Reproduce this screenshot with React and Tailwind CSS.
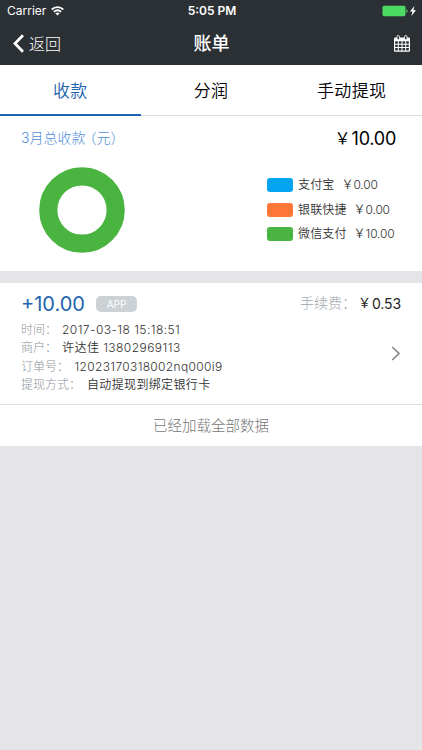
import React from 'react';

const tabs = ['收款', '分润', '手动提现'];

const channels = [
  { name: '支付宝', amount: '0.00', color: 'bg-[#03a5f0]' },
  { name: '银联快捷', amount: '0.00', color: 'bg-[#ff7736]' },
  { name: '微信支付', amount: '10.00', color: 'bg-[#49b43f]' },
];

const details = [
  { label: '时间：', value: '2017-03-18 15:18:51', width: 'w-[41px]', tracking: 'tracking-[0.45px]' },
  { label: '商户：', value: '许达佳 13802969113', width: 'w-[41px]', tracking: 'tracking-[0.45px]' },
  { label: '订单号：', value: '12023170318002nq000i9', width: 'w-[53.5px]', tracking: 'tracking-[0.34px]' },
  { label: '提现方式：', value: '自动提现到绑定银行卡', width: 'w-[66px]', tracking: 'tracking-[0.35px]' },
];

function StatusBar() {
  return (
    <div className="grid h-[22px] grid-cols-3 items-center pl-[7px] pr-[5px] text-[12px] text-white">
      <div className="flex items-center gap-[5px]">
        <span>Carrier</span>
        <svg width="13" height="10" viewBox="0 0 13 10" fill="none" stroke="currentColor" strokeWidth="1.8">
          <path d="M0.7 3.5C4 0.4 9 0.4 12.3 3.5" />
          <path d="M2.8 5.9C5 3.9 8 3.9 10.2 5.9" />
          <path d="M6.5 9.6L4.3 7.3C5.6 6.2 7.4 6.2 8.7 7.3Z" fill="currentColor" stroke="none" />
        </svg>
      </div>
      <span className="text-center font-semibold">5:05 PM</span>
      <div className="flex items-center justify-end">
        <svg width="35" height="12" viewBox="0 0 35 12">
          <rect x="0.5" y="0.8" width="23" height="10.4" rx="1.6" fill="#4cd964" />
          <path d="M24.3 4.2c1.8.4 1.8 3.2 0 3.6z" fill="#4cd964" />
          <path d="M32.4 1L28 6.6h2.5L29.4 11 34 5.2h-2.6z" fill="#fff" />
        </svg>
      </div>
    </div>
  );
}

function CalendarIcon() {
  return (
    <svg width="16" height="17" viewBox="0 0 16 17">
      <path
        fill="#fff"
        fillRule="evenodd"
        d="M1 2.5h14a1 1 0 0 1 1 1v12.3a1 1 0 0 1-1 1h-14a1 1 0 0 1-1-1V3.5a1 1 0 0 1 1-1zM1.2 6.3v2.4h2.6v-2.4zM4.8 6.3v2.4h2.7v-2.4zM8.5 6.3v2.4h2.7v-2.4zM12.2 6.3v2.4h2.6v-2.4zM1.2 9.7v2.4h2.6v-2.4zM4.8 9.7v2.4h2.7v-2.4zM8.5 9.7v2.4h2.7v-2.4zM12.2 9.7v2.4h2.6v-2.4zM1.2 13.1v2.5h2.6v-2.5zM4.8 13.1v2.5h2.7v-2.5zM8.5 13.1v2.5h2.7v-2.5zM12.2 13.1v2.5h2.6v-2.5z"
      />
      <rect x="3" y="0.5" width="2.4" height="4.3" rx="1.2" fill="#2b3034" stroke="#fff" strokeWidth="0.9" />
      <rect x="10.6" y="0.5" width="2.4" height="4.3" rx="1.2" fill="#2b3034" stroke="#fff" strokeWidth="0.9" />
    </svg>
  );
}

function Header() {
  return (
    <header className="h-[65px] bg-[#2b3034]">
      <StatusBar />
      <div className="grid h-[43px] grid-cols-3 items-center pl-[13px] pr-[12px] text-white">
        <button className="flex items-center gap-[5px]">
          <svg width="11" height="19" viewBox="0 0 11 19" fill="none" stroke="currentColor" strokeWidth="2.8">
            <path d="M10 1.2L2 9.5L10 17.8" />
          </svg>
          <span className="text-[16px] font-light">返回</span>
        </button>
        <h1 className="text-center text-[18px] font-medium">账单</h1>
        <div className="flex justify-end">
          <CalendarIcon />
        </div>
      </div>
    </header>
  );
}

function Tabs() {
  return (
    <nav className="grid h-[51px] grid-cols-3 bg-white text-[17px] font-[350] tracking-[0.35px]">
      {tabs.map((tab, i) => (
        <button
          key={tab}
          className={
            i === 0
              ? 'border-b-2 border-[#1d64ae] pt-[4px] text-[#1d64ae]'
              : 'border-b border-[#dcdcde] pt-[3px] text-black'
          }
        >
          {tab}
        </button>
      ))}
    </nav>
  );
}

function Summary() {
  return (
    <section className="h-[155px] bg-white pl-[21px] pr-[26px] pt-[10px]">
      <div className="flex h-[24px] items-center justify-between">
        <span className="flex pb-[2px] text-[14px] font-light text-[#4f8edb]">
          3月总收款<span className="-ml-[3px]">（元）</span>
        </span>
        <span className="flex items-center text-[18px] text-black">
          <span className="w-[17px] shrink-0 text-[16px]">￥</span>
          <span className="tracking-[-0.25px]">10.00</span>
        </span>
      </div>
      <div className="flex justify-between pl-[18px] pt-[17px]">
        <svg width="86" height="86" viewBox="0 0 86 86">
          <circle cx="43" cy="43" r="33.7" fill="none" stroke="#49b43f" strokeWidth="18.2" />
        </svg>
        <ul className="w-[129px] pt-[6px]">
          {channels.map((c) => (
            <li key={c.name} className="flex h-[24.5px] items-center whitespace-nowrap text-[12px] font-[350] text-[#333]">
              <span className={`mr-[5px] h-[14px] w-[26px] shrink-0 rounded-[3px] ${c.color}`} />
              <span className="mr-[7px] tracking-[0.15px]">{c.name}</span>
              <span className="w-[12px] shrink-0">￥</span>
              <span className="tracking-[-0.2px]">{c.amount}</span>
            </li>
          ))}
        </ul>
      </div>
    </section>
  );
}

function Bill() {
  return (
    <section className="h-[122px] border-b border-[#dfdfe2] bg-white pl-[21px] pr-[21px] pt-[9px]">
      <div className="flex h-[24px] items-center">
        <span className="text-[20px] text-[#1d64ae]">+10.00</span>
        <span className="ml-[11px] flex h-[16px] w-[41px] items-center justify-center rounded-[5px] bg-[#cbd1d5] text-[10px] text-white">
          APP
        </span>
        <span className="ml-auto w-[58px] whitespace-nowrap pb-[3px] text-[14px] font-light text-[#a0a5ad]">手续费：</span>
        <span className="w-[14px] pb-[2px] text-[13px] text-[#222]">￥</span>
        <span className="pb-[2px] text-[14px] tracking-[-0.1px] text-[#222]">0.53</span>
      </div>
      <div className="flex items-center justify-between pt-[5px]">
        <ul>
          {details.map((d) => (
            <li key={d.label} className="flex h-[18.3px] items-center text-[12px] font-[350] text-[#333]">
              <span className={`shrink-0 whitespace-nowrap font-light text-[#8d939b] ${d.width}`}>{d.label}</span>
              <span className={`whitespace-nowrap ${d.tracking}`}>{d.value}</span>
            </li>
          ))}
        </ul>
        <svg className="-mt-[9px]" width="10" height="15" viewBox="0 0 10 15" fill="none" stroke="#858588" strokeWidth="1.6">
          <path d="M1.2 1L8 7.5L1.2 14" />
        </svg>
      </div>
    </section>
  );
}

function App() {
  return (
    <div className="h-[750px] w-[422px] overflow-hidden bg-[#e5e4e9] font-['Inter','Noto_Sans_CJK_SC',sans-serif]">
      <Header />
      <Tabs />
      <Summary />
      <div className="h-[12px]" />
      <Bill />
      <footer className="flex h-[41px] items-center justify-center bg-white text-[14.5px] font-light text-[#777]">
        已经加载全部数据
      </footer>
    </div>
  );
}

export default App;
